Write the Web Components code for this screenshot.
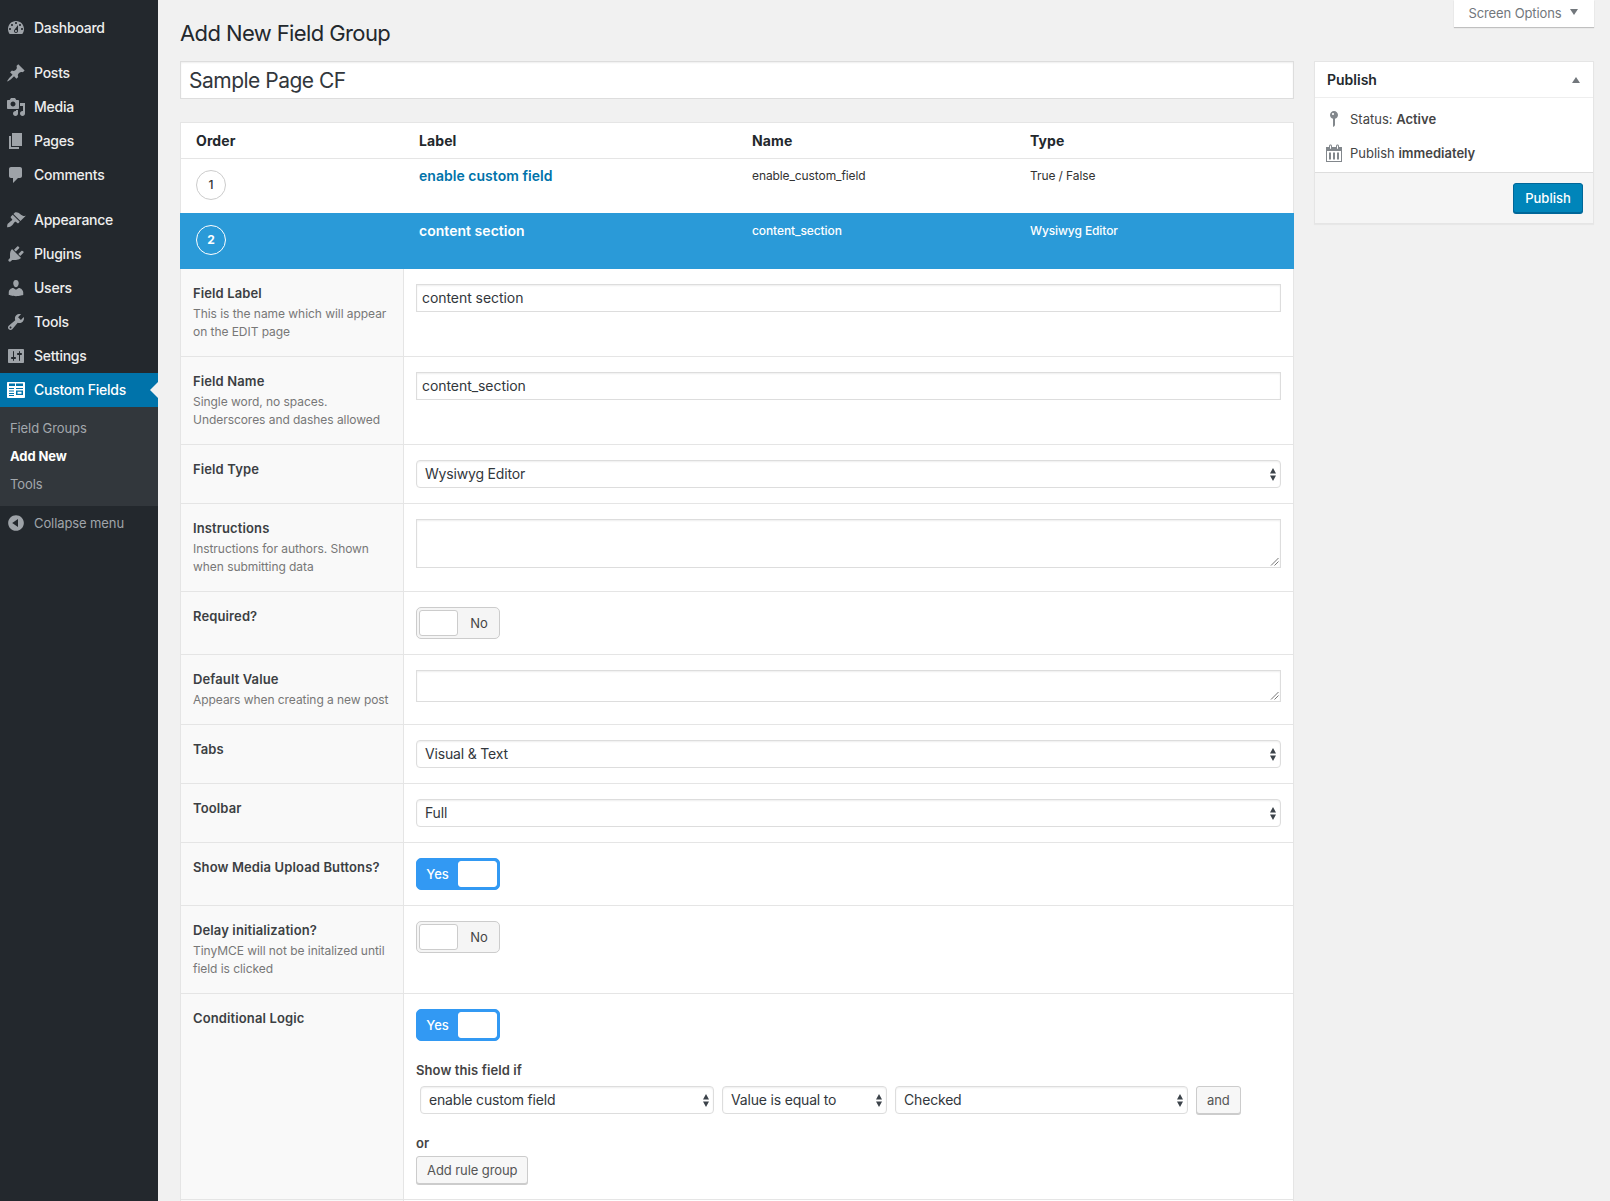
<!DOCTYPE html>
<html lang="en"><head><meta charset="utf-8"><title>Add New Field Group</title>
<style>
html,body{margin:0;padding:0;background:#f1f1f1;}
body{font-family:Inter,"Liberation Sans",sans-serif;font-size:13px;color:#444;height:1201px;overflow:hidden;}
</style></head><body>
<wp-app>
  <wp-sidebar slot="side">
    <wp-menu icon="dashboard">Dashboard</wp-menu>
    <wp-sep></wp-sep>
    <wp-menu icon="post">Posts</wp-menu>
    <wp-menu icon="media">Media</wp-menu>
    <wp-menu icon="page">Pages</wp-menu>
    <wp-menu icon="comments">Comments</wp-menu>
    <wp-sep></wp-sep>
    <wp-menu icon="appearance">Appearance</wp-menu>
    <wp-menu icon="plugins">Plugins</wp-menu>
    <wp-menu icon="users">Users</wp-menu>
    <wp-menu icon="tools">Tools</wp-menu>
    <wp-menu icon="settings">Settings</wp-menu>
    <wp-menu icon="fields" current>Custom Fields</wp-menu>
    <wp-submenu>
      <wp-subitem>Field Groups</wp-subitem>
      <wp-subitem current>Add New</wp-subitem>
      <wp-subitem>Tools</wp-subitem>
    </wp-submenu>
    <wp-menu icon="collapse" dim>Collapse menu</wp-menu>
  </wp-sidebar>

  <wp-topbar>Add New Field Group</wp-topbar>
  <wp-columns>
    <div slot="main">
      <cf-title>Sample Page CF</cf-title>
      <cf-table>
        <cf-head></cf-head>
        <cf-item num="1" label="enable custom field" name="enable_custom_field" type="True / False"></cf-item>
        <cf-item open num="2" label="content section" name="content_section" type="Wysiwyg Editor"></cf-item>
        <cf-row label="Field Label"><span slot="desc">This is the name which will appear<br>on the EDIT page</span><cf-input>content section</cf-input></cf-row>
        <cf-row label="Field Name"><span slot="desc">Single word, no spaces.<br>Underscores and dashes allowed</span><cf-input>content_section</cf-input></cf-row>
        <cf-row label="Field Type"><cf-select>Wysiwyg Editor</cf-select></cf-row>
        <cf-row label="Instructions"><span slot="desc">Instructions for authors. Shown<br>when submitting data</span><cf-textarea h="49"></cf-textarea></cf-row>
        <cf-row label="Required?"><cf-switch>No</cf-switch></cf-row>
        <cf-row label="Default Value"><span slot="desc">Appears when creating a new post</span><cf-textarea h="32"></cf-textarea></cf-row>
        <cf-row label="Tabs"><cf-select>Visual &amp; Text</cf-select></cf-row>
        <cf-row label="Toolbar"><cf-select>Full</cf-select></cf-row>
        <cf-row label="Show Media Upload Buttons?"><cf-switch on>Yes</cf-switch></cf-row>
        <cf-row label="Delay initialization?"><span slot="desc">TinyMCE will not be initalized until<br>field is clicked</span><cf-switch>No</cf-switch></cf-row>
        <cf-row label="Conditional Logic">
          <cf-switch on>Yes</cf-switch>
          <cf-rules>
            <cf-select w="294">enable custom field</cf-select>
            <cf-select w="165">Value is equal to</cf-select>
            <cf-select w="293">Checked</cf-select>
            <cf-button slot="and">and</cf-button>
            <cf-button slot="add">Add rule group</cf-button>
          </cf-rules>
        </cf-row>
        <cf-row label=""></cf-row>
      </cf-table>
    </div>
    <wp-publish slot="aside"></wp-publish>
  </wp-columns>
</wp-app>

<script>
const ICONS={
dashboard:'M3.76 16h12.48c1.1-1.37 1.76-3.11 1.76-5 0-4.42-3.58-8-8-8s-8 3.58-8 8c0 1.89.66 3.63 1.76 5zM10 4c.55 0 1 .45 1 1s-.45 1-1 1-1-.45-1-1 .45-1 1-1zM6 6c.55 0 1 .45 1 1s-.45 1-1 1-1-.45-1-1 .45-1 1-1zm8 0c.55 0 1 .45 1 1s-.45 1-1 1-1-.45-1-1 .45-1 1-1zm-5.37 5.55L12 7v6c0 1.1-.9 2-2 2s-2-.9-2-2c0-.57.24-1.08.63-1.45zM4 10c.55 0 1 .45 1 1s-.45 1-1 1-1-.45-1-1 .45-1 1-1zm12 0c.55 0 1 .45 1 1s-.45 1-1 1-1-.45-1-1 .45-1 1-1zm-5 3c0-.55-.45-1-1-1s-1 .45-1 1 .45 1 1 1 1-.45 1-1z',
post:'M10.44 3.02l1.82-1.82 6.36 6.35-1.83 1.82c-1.05-.68-2.48-.57-3.41.36l-.75.75c-.92.93-1.04 2.35-.35 3.41l-1.83 1.82-2.41-2.41-2.8 2.79c-.42.42-3.38 2.71-3.8 2.29s1.86-3.39 2.28-3.81l2.79-2.79L4.1 9.36l1.83-1.82c1.05.69 2.48.57 3.4-.36l.75-.75c.93-.92 1.05-2.35.36-3.41z',
media:'M13 11V4c0-.55-.45-1-1-1h-1.67L9 1H5L3.67 3H2c-.55 0-1 .45-1 1v7c0 .55.45 1 1 1h10c.55 0 1-.45 1-1zM7 4.5c1.38 0 2.5 1.12 2.5 2.5S8.38 9.5 7 9.5 4.5 8.38 4.5 7 5.62 4.5 7 4.5zM14 6h5v10.5c0 1.38-1.12 2.5-2.5 2.5S14 17.88 14 16.5s1.12-2.5 2.5-2.5c.17 0 .34.02.5.05V9h-3V6zm-4 8.05V13h2v3.5c0 1.38-1.12 2.5-2.5 2.5S7 17.88 7 16.5 8.12 14 9.5 14c.17 0 .34.02.5.05z',
page:'M6 15V2h10v13H6zm-1 1h8v2H3V5h2v11z',
comments:'M5 2h9c1.1 0 2 .9 2 2v7c0 1.1-.9 2-2 2h-2l-5 5v-5H5c-1.1 0-2-.9-2-2V4c0-1.1.9-2 2-2z',
appearance:'M14.48 11.06L7.41 3.99l1.5-1.5c.5-.56 2.3-.47 3.51.32 1.21.8 1.43 1.28 2.91 2.1 1.18.64 2.45 1.26 4.45.85zm-.71.71L6.7 4.7 4.93 6.47c-.39.39-.39 1.02 0 1.41l1.06 1.06c.39.39.39 1.03 0 1.42-.6.6-1.43 1.11-2.21 1.69-.35.26-.7.53-1.01.84C1.43 13.23 1 15.4 1.16 17.13c1.9.2 3.6-.4 5.04-1.9.31-.31.58-.66.84-1.01.58-.78 1.09-1.61 1.69-2.21.39-.39 1.03-.39 1.42 0l1.06 1.06c.39.39 1.02.39 1.41 0z',
plugins:'M13.11 4.36L9.87 7.6 8 5.73l3.24-3.24c.35-.34 1.05-.2 1.56.32.52.51.66 1.21.31 1.55zm-8 1.77l.91-1.12 9.01 9.01-1.19.84c-.71.71-2.63 1.16-3.82 1.16H6.14L4.9 17.26c-.59.59-1.54.59-2.12 0-.59-.58-.59-1.53 0-2.12l1.24-1.24v-3.88c0-1.13.4-3.19 1.09-3.89zm7.26 3.97l3.24-3.24c.34-.35 1.04-.21 1.55.31.52.51.66 1.21.31 1.55l-3.24 3.25z',
users:'M10 9.25c-2.27 0-2.73-3.44-2.73-3.44C7 4.02 7.82 2 9.97 2c2.16 0 2.98 2.02 2.71 3.81 0 0-.41 3.44-2.68 3.44zm0 2.57L12.72 10c2.39 0 4.52 2.33 4.52 4.53v2.49s-3.65 1.13-7.24 1.13c-3.65 0-7.24-1.13-7.24-1.13v-2.49c0-2.25 1.94-4.48 4.47-4.48z',
tools:'M16.68 9.77c-1.34 1.34-3.3 1.67-4.95.99l-5.41 6.52c-.99.99-2.59.99-3.58 0s-.99-2.59 0-3.57l6.52-5.42c-.68-1.65-.35-3.61.99-4.95 1.28-1.28 3.12-1.62 4.72-1.06l-2.89 2.89 2.82 2.82 2.86-2.87c.53 1.58.18 3.39-1.08 4.65zM3.81 16.21c.4.39 1.04.39 1.43 0 .4-.4.4-1.04 0-1.43-.39-.4-1.03-.4-1.43 0-.39.39-.39 1.03 0 1.43z',
settings:'M18 16V4c0-.55-.45-1-1-1H3c-.55 0-1 .45-1 1v12c0 .55.45 1 1 1h14c.55 0 1-.45 1-1zM8 11h1c.55 0 1 .45 1 1s-.45 1-1 1H8v1.5c0 .28-.22.5-.5.5s-.5-.22-.5-.5V13H6c-.55 0-1-.45-1-1s.45-1 1-1h1V5.5c0-.28.22-.5.5-.5s.5.22.5.5V11zm5-2h-1c-.55 0-1-.45-1-1s.45-1 1-1h1V5.5c0-.28.22-.5.5-.5s.5.22.5.5V7h1c.55 0 1 .45 1 1s-.45 1-1 1h-1v5.5c0 .28-.22.5-.5.5s-.5-.22-.5-.5V9z',
fields:'M2 2h16c.55 0 1 .45 1 1v14c0 .55-.45 1-1 1H2c-.55 0-1-.45-1-1V3c0-.55.45-1 1-1zm1 1.5V6h6V3.5H3zm7 0V6h7V3.5h-7zM3 8v1h5V8H3zm7 0v1h7V8h-7zm-7 2.5v1h5v-1H3zm7 0V15h7v-4.500h-7zm1.500 1.300h4v1.900h-4v-1.900zM3 13v1h5v-1H3zm0 2v1h5v-1H3z',
collapse:'M10 2.16c4.33 0 7.84 3.51 7.84 7.84s-3.51 7.84-7.84 7.84S2.16 14.33 2.16 10 5.71 2.16 10 2.16zm2 11.72V6.12L6.18 9.97z',
pin:'M14 6c0 1.86-1.28 3.41-3 3.86V16c0 1-2 2-2 2V9.86c-1.72-.45-3-2-3-3.86 0-2.21 1.79-4 4-4s4 1.790 4 4zM8 5c0 .55.45 1 1 1s1-.45 1-1-.45-1-1-1-1 .45-1 1z',
calendar:'M15 4h3v15H2V4h3V3c0-.41.15-.76.44-1.06.29-.29.65-.44 1.06-.44s.77.15 1.06.44c.29.3.44.65.44 1.06v1h4V3c0-.41.15-.76.44-1.06.29-.29.65-.44 1.06-.44s.77.15 1.06.44c.29.3.44.65.44 1.060v1zM6 3v2.500c0 .14.05.26.15.36.09.09.21.14.35.14s.26-.05.35-.14c.1-.1.15-.22.15-.36V3c0-.14-.05-.26-.15-.35-.09-.1-.21-.15-.35-.15s-.26.05-.35.15c-.1.09-.15.21-.15.35zm7 0v2.500c0 .14.05.26.14.36.1.09.22.14.36.14s.26-.05.36-.14c.09-.1.14-.22.14-.36V3c0-.14-.05-.26-.14-.35-.1-.1-.22-.15-.36-.15s-.26.05-.36.15c-.09.09-.14.21-.14.35zm4 15V8H3v10h14zM5 9.500h2v7H5v-7zm4 0h2v7H9v-7zm4 0h2v7h-2v-7z'
};
const svg=(n,s=20,c='currentColor')=>`<svg width="${s}" height="${s}" viewBox="0 0 20 20" fill="${c}" fill-rule="evenodd" aria-hidden="true"><path d="${ICONS[n]}"/></svg>`;
function def(name,render,extra){
  customElements.define(name,class extends HTMLElement{
    constructor(){super();this.attachShadow({mode:'open'});}
    connectedCallback(){this.shadowRoot.innerHTML=render(this);}
  });
}
def('wp-app',()=>`<style>:host{display:grid;grid-template-columns:158px 1fr;height:1201px;overflow:hidden}
.c{padding:0 16px 0 22px;min-width:0}</style><slot name="side"></slot><div class="c"><slot></slot></div>`);
def('wp-sidebar',()=>`<style>:host{display:block;background:#23282d;padding-top:11px;height:100%;box-sizing:border-box}</style><slot></slot>`);
def('wp-sep',()=>`<style>:host{display:block;height:11px}</style>`);
def('wp-menu',h=>{
  const cur=h.hasAttribute('current'),dim=h.hasAttribute('dim');
  return `<style>:host{display:flex;align-items:center;height:34px;padding-left:6px;gap:8px;font-size:14px;font-weight:500;letter-spacing:-.25px;position:relative;
  color:${dim?'#a0a5aa':'#eee'};background:${cur?'#0073aa':'transparent'};${cur?'color:#fff;':''}${dim?'font-size:13px;font-weight:400;letter-spacing:-.1px;':''}}
  svg{color:${cur?'#fff':'#9ea3a8'};flex:none}
  span{margin-top:${dim?0:-2}px}
  .ar{position:absolute;right:0;top:50%;margin-top:-8px;border:8px solid transparent;border-right-color:#f1f1f1;border-left:0}</style>
  ${svg(h.getAttribute('icon'))}<span><slot></slot></span>${cur?'<i class="ar"></i>':''}`;
});
def('wp-submenu',()=>`<style>:host{display:block;background:#32373c;padding:7px 0 8px}</style><slot></slot>`);
def('wp-subitem',h=>`<style>:host{display:block;height:28px;line-height:28px;padding-left:10px;font-size:13px;letter-spacing:-.1px;color:${h.hasAttribute('current')?'#fff':'#a3a8ad'};font-weight:${h.hasAttribute('current')?700:400}}</style><slot></slot>`);
def('wp-topbar',()=>`<style>:host{display:flex;justify-content:space-between;align-items:flex-start;height:61px}
h1{margin:20px 0 0;font-size:22px;line-height:27px;font-weight:400;color:#23282d;letter-spacing:-.6px}
.so{width:140px;height:27px;box-sizing:border-box;background:#fff;box-shadow:0 1px 1px rgba(0,0,0,.2);display:flex;align-items:center;justify-content:center;gap:8px;color:#72777c;font-size:13px;padding:0 2px 2px 0}
.so span{letter-spacing:-.1px}
.so i{border:4px solid transparent;border-top:6px solid #72777c;border-bottom:0;margin-top:-1px}</style>
<h1><slot></slot></h1><div class="so"><span>Screen Options</span><i></i></div>`);
def('wp-columns',()=>`<style>:host{display:grid;grid-template-columns:1114px 280px;gap:20px;align-items:start}</style><slot name="main"></slot><slot name="aside"></slot>`);
def('cf-title',()=>`<style>:host{display:block;height:38px;box-sizing:border-box;border:1px solid #ddd;background:#fff;box-shadow:inset 0 1px 2px rgba(0,0,0,.07);padding-left:8px;font-size:21px;line-height:38px;color:#32373c;letter-spacing:-.5px;margin-bottom:23px}</style><slot></slot>`);
def('cf-table',()=>`<style>:host{display:block;border-top:1px solid #e5e5e5;background:#fff}</style><slot></slot>`);
const cols='grid-template-columns:223px 333px 278px 1fr';
def('cf-head',()=>`<style>:host{display:grid;${cols};height:36px;box-sizing:border-box;align-items:center;border:1px solid #e5e5e5;border-width:0 1px 1px;font-size:14px;font-weight:700;letter-spacing:.1px;color:#23282d;background:#fff}
span{padding-left:15px}</style><span>Order</span><span>Label</span><span>Name</span><span>Type</span>`);
def('cf-item',h=>{const o=h.hasAttribute('open');const a=n=>h.getAttribute(n);
 return `<style>:host{display:grid;${cols};height:${o?56:54}px;box-sizing:border-box;background:${o?'#2a9ad8':'#fff'};${o?'':'border:solid #e5e5e5;border-width:0 1px;'}font-size:12px;color:${o?'#fff':'#333'};padding-left:${o?1:0}px}
 div{padding:${o?9:8}px 0 0 15px;line-height:18px;${o?'font-weight:500;':''}letter-spacing:-.1px}
 .c{padding-top:${o?12:11}px}
 .l{font-size:14px;font-weight:600;color:${o?'#fff':'#0073aa'};letter-spacing:.03px}
 b{display:flex;width:30px;height:30px;box-sizing:border-box;border:1px solid ${o?'#fff':'#ccc'};border-radius:50%;align-items:center;justify-content:center;font-size:12px;font-weight:${o?700:500};color:${o?'#fff':'#333'}}</style>
 <div class="c"><b>${a('num')}</b></div><div class="l">${a('label')}</div><div>${a('name')}</div><div>${a('type')}</div>`});
def('cf-row',h=>`<style>:host{display:grid;grid-template-columns:223px 1fr;border:solid #e5e5e5;border-width:0 1px 1px;background:#fff}
.a{background:#f9f9f9;border-right:1px solid #e5e5e5;padding:15px 12px;box-sizing:border-box;min-width:0}
.b{padding:15px 12px;min-width:0}
label{display:block;font-size:13px;line-height:18px;font-weight:600;letter-spacing:.12px;color:#3c3f43;margin-bottom:3px}
.d{font-size:12px;line-height:18px;color:#777;letter-spacing:-.05px}</style>
<div class="a"><label>${h.getAttribute('label')}</label><div class="d"><slot name="desc"></slot></div></div><div class="b"><slot></slot></div>`);
const field='box-sizing:border-box;border:1px solid #ddd;box-shadow:inset 0 1px 2px rgba(0,0,0,.07);background:#fff;color:#32373c;font-size:14px;';
def('cf-input',()=>`<style>:host{display:block;height:28px;${field}line-height:26px;padding-left:5px;letter-spacing:-.06px}</style><slot></slot>`);
def('cf-textarea',h=>`<style>:host{display:block;position:relative;height:${h.getAttribute('h')}px;${field}}
svg{position:absolute;right:1px;bottom:1px}</style><svg width="9" height="9" viewBox="0 0 9 9" stroke="#777" fill="none"><path d="M1 8.500L8.500 1M4.500 8.500L8.500 4.500"/></svg>`);
def('cf-select',h=>{const w=h.getAttribute('w');return `<style>:host{display:flex;align-items:center;justify-content:space-between;${w?`width:${w}px;`:''}height:28px;border-radius:4px;${field}padding:0 3px 0 8px;letter-spacing:-.18px}
svg{flex:none}span{margin-top:-1px}</style><span><slot></slot></span><svg width="8" height="13" viewBox="0 0 8 13" fill="#3c434a"><path d="M4 0L7 5.500H1zM4 13L1 7.500h6z"/></svg>`});
def('cf-switch',h=>{const on=h.hasAttribute('on');return `<style>:host{display:block;position:relative;width:84px;height:32px;box-sizing:border-box;border-radius:5px;border:1px solid ${on?'#3299f3':'#ccc'};background:${on?'#3299f3':'#f5f5f5'};color:${on?'#fff':'#444'};font-size:13px;font-weight:${on?500:400}}
.k{position:absolute;top:2px;${on?'right:2px':'left:2px'};width:39px;height:26px;box-sizing:border-box;background:#fff;border:1px solid ${on?'#fff':'#ccc'};border-radius:3px}
.t{position:absolute;top:0;${on?'left:0':'right:0'};width:${on?41:40}px;line-height:30px;text-align:center}</style><div class="k"></div><div class="t"><slot></slot></div>`});
def('cf-rules',()=>`<style>:host{display:block}
.s{font-size:13px;font-weight:600;line-height:18px;margin-top:20px;color:#444;letter-spacing:.1px}
.r{display:flex;gap:8px;padding-left:4px;margin-top:7px;height:28px}
.o{font-size:13px;font-weight:600;line-height:18px;margin:20px 0 4px;color:#444}</style>
<div class="s">Show this field if</div><div class="r"><slot></slot><slot name="and"></slot></div><div class="o">or</div><slot name="add"></slot>`);
def('cf-button',()=>`<style>:host{display:inline-block;height:28px;box-sizing:border-box;border:1px solid #ccc;border-radius:3px;background:#f7f7f7;box-shadow:0 1px 0 #ccc;color:#555;font-size:13px;line-height:26px;padding:0 10px;letter-spacing:-.08px}</style><slot></slot>`);
def('wp-publish',()=>`<style>:host{display:block;background:#fff;border:1px solid #e5e5e5;box-shadow:0 1px 1px rgba(0,0,0,.04)}
.h{height:36px;box-sizing:border-box;display:flex;align-items:center;justify-content:space-between;padding:0 12px 0 12px;border-bottom:1px solid #eee;font-size:14px;font-weight:600;color:#23282d}
.h i{border:4px solid transparent;border-bottom:6px solid #72777c;border-top:0;margin-right:1px}
.b{padding:12px 9px 10px;display:flex;flex-direction:column;gap:16px;font-size:13px;color:#444}
.l{display:flex;align-items:center;gap:6px;height:18px;line-height:18px}
.l svg{color:#82878c;flex:none}
b{font-weight:600}
.f{border-top:1px solid #ddd;background:#f5f5f5;height:51px;box-sizing:border-box;display:flex;justify-content:flex-end;align-items:flex-start;padding:10px 10px 0}
button{height:30px;width:70px;box-sizing:border-box;border:1px solid #006799;border-radius:3px;background:#0085ba;box-shadow:0 1px 0 #006799;color:#fff;font:500 13px Inter,"Liberation Sans",sans-serif;padding:0}</style>
<div class="h"><span>Publish</span><i></i></div>
<div class="b"><div class="l">${svg('pin')}<span>Status: <b>Active</b></span></div><div class="l">${svg('calendar')}<span>Publish <b>immediately</b></span></div></div>
<div class="f"><button>Publish</button></div>`);
</script>
</body></html>
